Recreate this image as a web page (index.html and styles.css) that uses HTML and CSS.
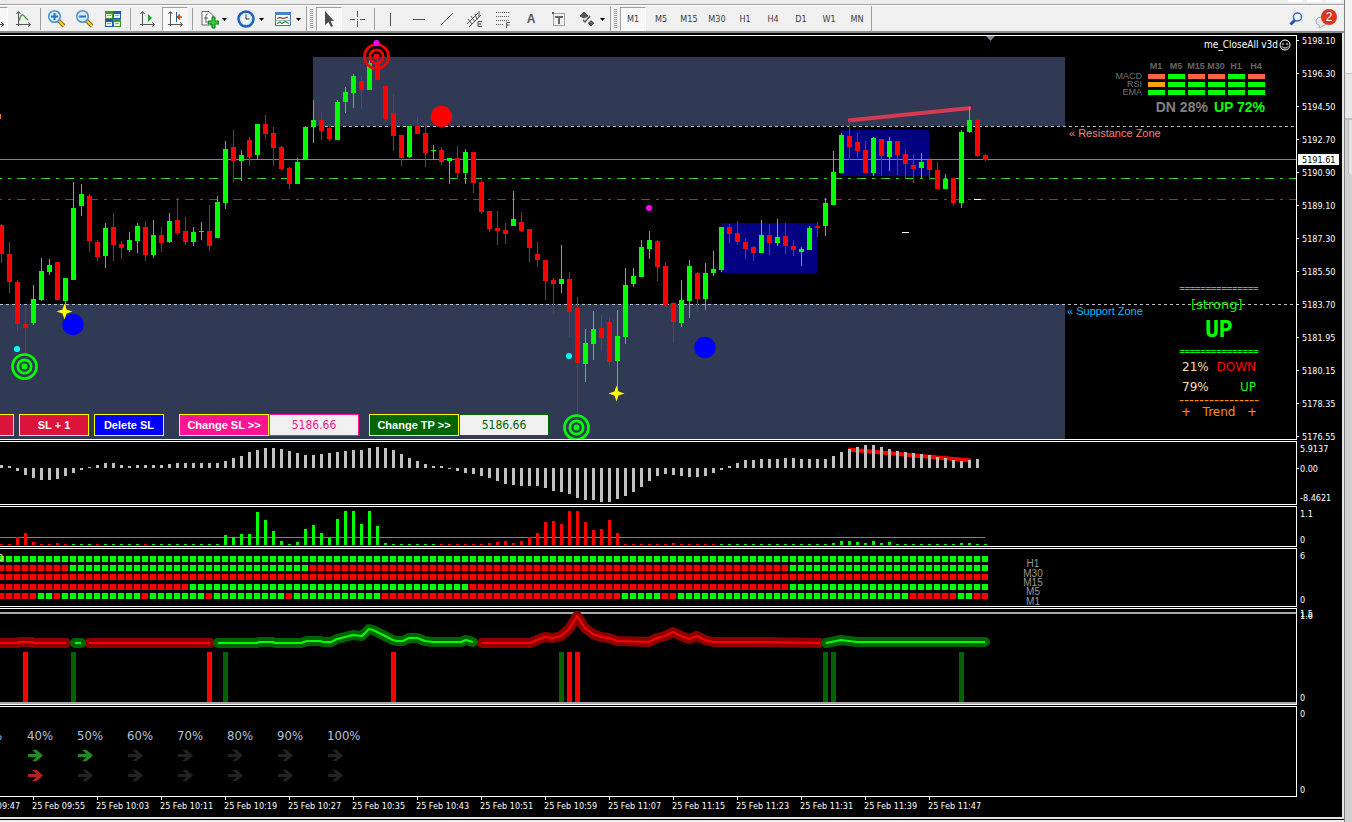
FILE: index.html
```html
<!DOCTYPE html>
<html lang="en">
<head>
<meta charset="utf-8">
<title>Trading terminal</title>
<link rel="stylesheet" href="styles.css">
</head>
<body>
<div class="window">
  <div class="titlebar"><i></i><i></i><i></i></div>
  <header class="toolbar">
    <button class="tool pressed first" aria-label="Candlesticks"><svg width="20" height="20"><path d="M14 15.5h5M16 13.5l3 2-3 2" class="ln"/></svg></button>
    <button class="tool" aria-label="Line chart"><svg width="20" height="20"><path d="M5.500 3v14M3 15.500h14M3.500 5l2-2.500 2 2.500M15 13.500l2.500 2-2.500 2" class="ln"/><path d="M6 12C8 4 10 5 12 8l3 3" fill="none" stroke="#3a9a3a" stroke-width="1.300"/></svg></button>
    <span class="sep"></span>
    <button class="tool" aria-label="Zoom in"><svg width="20" height="20"><path d="M11 11l6 6" stroke="#8f6a10" stroke-width="4"/><path d="M11 11l6 6" stroke="#f2cf3a" stroke-width="2"/><circle cx="7.500" cy="7.500" r="5.800" fill="#d4ecf8" stroke="#4a8fc8" stroke-width="1.500"/><path d="M4 7.500h7M7.500 4v7" stroke="#2a6cb0" stroke-width="2"/></svg></button>
    <button class="tool" aria-label="Zoom out"><svg width="20" height="20"><path d="M11 11l6 6" stroke="#8f6a10" stroke-width="4"/><path d="M11 11l6 6" stroke="#f2cf3a" stroke-width="2"/><circle cx="7.500" cy="7.500" r="5.800" fill="#d4ecf8" stroke="#4a8fc8" stroke-width="1.500"/><path d="M4 7.500h7" stroke="#2a6cb0" stroke-width="2"/></svg></button>
    <button class="tool" aria-label="Tile windows"><svg width="20" height="20"><path d="M2 2h8v8H2zM10 10h8v8h-8z" fill="#3c9a1e"/><path d="M10 2h8v8h-8zM2 10h8v8H2z" fill="#2456c0"/><path d="M3 5h6v4H3zM11 5h6v4h-6zM3 13h6v4H3zM11 13h6v4h-6z" fill="#e8f2e8"/><path d="M4 6.500h4M12 6.500h4M4 14.500h4M12 14.500h4" stroke="#8ab"/></svg></button>
    <span class="sep"></span>
    <button class="tool" aria-label="Auto scroll"><svg width="20" height="20"><path d="M5.500 3v14M3 15.500h14M3.500 5l2-2.500 2 2.500M15 13.500l2.500 2-2.500 2" class="ln"/><path d="M11 5l4 4-4 4z" fill="#1fa030"/></svg></button>
    <button class="tool pressed" aria-label="Chart shift"><svg width="20" height="20"><path d="M5.500 3v14M3 15.500h14M3.500 5l2-2.500 2 2.500M15 13.500l2.500 2-2.500 2" class="ln"/><path d="M11.500 3v10" stroke="#2060a0"/><path d="M17 8h-4M15 5.500L12.500 8l2.500 2.500" fill="none" stroke="#c04010" stroke-width="1.500"/></svg></button>
    <span class="sep"></span>
    <button class="tool wide" aria-label="Indicators"><svg width="20" height="20"><path d="M3 2.500h7l4 4V16H3z" fill="#fff" stroke="#666"/><path d="M9 5c-3 0-2 3-2 9M5 9h4" fill="none" stroke="#555"/><path d="M9 12h4V8h3v4h4v3h-4v4h-3v-4H9z" fill="#2fd03a" stroke="#0c7a18"/></svg><svg class="drop" width="5" height="3"><path d="M0 0h5L2.500 3z"/></svg></button>
    <button class="tool wide" aria-label="Periods"><svg width="20" height="20"><circle cx="10" cy="10" r="7.500" fill="#eaf5fc" stroke="#1d62b4" stroke-width="2.500"/><circle cx="10" cy="10" r="5.500" fill="none" stroke="#8ab8e0" stroke-dasharray="1 2"/><path d="M10 5.500V10h3.500" fill="none" stroke="#333"/></svg><svg class="drop" width="5" height="3"><path d="M0 0h5L2.500 3z"/></svg></button>
    <button class="tool wide" aria-label="Templates"><svg width="20" height="20"><path d="M2.500 3.500h15v13h-15z" fill="#fff" stroke="#3a76b4"/><path d="M2 3h16v3H2z" fill="#3f86cc"/><path d="M4 9.500l3-1 3 1 5-1.500" stroke="#a03020" fill="none" stroke-width="1.300"/><path d="M3 11.500h14" stroke="#9bc"/><path d="M4 14.500l3-1.500 2 1.500 3-2 4 2" stroke="#2a8a3a" fill="none" stroke-width="1.300"/></svg><svg class="drop" width="5" height="3"><path d="M0 0h5L2.500 3z"/></svg></button>
    <span class="end"></span><span class="grip"></span>
    <button class="tool pressed" aria-label="Cursor"><svg width="20" height="20"><path d="M6 2v14l3.500-3 2.500 5 2-1-2.500-5H15z" fill="#4d4d4d"/></svg></button>
    <button class="tool" aria-label="Crosshair"><svg width="20" height="20"><path d="M10.500 2v6M10.500 12v6M3 10.500h5M13 10.500h5M10 10.500h1" class="ln"/></svg></button>
    <span class="sep"></span>
    <button class="tool" aria-label="Vertical line"><svg width="20" height="20"><path d="M9.500 4v13" class="ln"/></svg></button>
    <button class="tool" aria-label="Horizontal line"><svg width="20" height="20"><path d="M4 10.500h12" class="ln"/></svg></button>
    <button class="tool" aria-label="Trendline"><svg width="20" height="20"><path d="M4 16L16 4" class="ln"/></svg></button>
    <button class="tool" aria-label="Equidistant channel"><svg width="20" height="20"><path d="M2 15L13 4M4 18L16 6M3 10l4 5M6 7l4 6M10 5l2 6M14 2v6" class="ln"/><path d="M17 12.500h-4v5h4M13 15h3" class="ln"/></svg></button>
    <button class="tool" aria-label="Fibonacci"><svg width="20" height="20"><path d="M3 3.500h14M3 7.500h14M3 11.500h14M3 15.500h8" class="ln" stroke-dasharray="1 1"/><path d="M17 13.500h-3.500V19M13 16h3.500" class="ln"/></svg></button>
    <button class="tool" aria-label="Text"><span class="letter">A</span></button>
    <button class="tool" aria-label="Text label"><svg width="20" height="20"><path d="M4.500 4.500h11v12h-11z" class="ln" stroke-dasharray="1 1"/><path d="M3 3h2v2H3z" fill="#555"/><path d="M6 8h8M10 8v7" stroke="#666" stroke-width="2"/></svg></button>
    <button class="tool wide" aria-label="Arrows"><svg width="20" height="20"><path d="M3 7l4-4 4 4-4 2zM11 14h6l-3 3z" fill="#555" stroke="#555"/><path d="M12 14l2-2 2 2M6 11l2 2 5-6" fill="none" stroke="#555" stroke-width="1.500"/></svg><svg class="drop" width="5" height="3"><path d="M0 0h5L2.500 3z"/></svg></button>
    <span class="end"></span><span class="grip"></span>
    <button class="tool pressed">M1</button><button class="tool">M5</button><button class="tool">M15</button><button class="tool">M30</button><button class="tool">H1</button><button class="tool">H4</button><button class="tool">D1</button><button class="tool">W1</button><button class="tool">MN</button>
    <span class="end"></span>
    <div class="right">
      <button class="plain" aria-label="Search"><svg width="14" height="14"><path d="M1.500 12.500l5-5" stroke="#2450b0" stroke-width="3"/><circle cx="8.500" cy="5" r="4" fill="#eef6fe" stroke="#3a66c8" stroke-width="1.500"/></svg></button>
      <button class="plain alerts" aria-label="Notifications"><svg width="14" height="14"><path d="M1 7a5.500 4.500 0 1 1 8 3.500L4 13l.5-2.500A4.500 4.500 0 0 1 1 7z" fill="#e4e6ea" stroke="#a8a8a8"/></svg><span class="badge">2</span></button>
    </div>
  </header>

  <main class="chart">
    <section class="pane">
      <div class="plot"><svg id="price" height="403"></svg>
        <p class="zone res">« Resistance Zone</p>
        <p class="zone sup">« Support Zone</p>
        <p class="expert">me_CloseAll v3d<svg width="12" height="12"><circle cx="6" cy="6" r="5" fill="none" stroke="#fff"/><path d="M4 4v2M8 4v2M3 7.500c1 2 5 2 6 0" fill="none" stroke="#fff"/></svg></p>
        <div class="signals">
          <table>
            <tr><td></td><th>M1</th><th>M5</th><th>M15</th><th>M30</th><th>H1</th><th>H4</th></tr>
            <tr><td>MACD</td><td><i class="t"></i></td><td><i></i></td><td><i class="t"></i></td><td><i class="t"></i></td><td><i></i></td><td><i class="t"></i></td></tr>
            <tr><td>RSI</td><td><i class="o"></i></td><td><i></i></td><td><i></i></td><td><i></i></td><td><i></i></td><td><i></i></td></tr>
            <tr><td>EMA</td><td><i></i></td><td><i></i></td><td><i></i></td><td><i></i></td><td><i></i></td><td><i></i></td></tr>
          </table>
          <p class="share"><span>DN 28%</span><b>UP 72%</b></p>
        </div>
        <div class="trend">
          <p class="rule">===============</p>
          <p class="strong">[strong]</p>
          <p class="up">UP</p>
          <p class="rule">===============</p>
          <p class="line"><span>21%</span><span class="red">DOWN</span></p>
          <p class="line"><span>79%</span><span class="lime">UP</span></p>
          <p class="rule dash">----------------</p>
          <p class="line orange"><span>+</span><span>Trend</span><span>+</span></p>
        </div>
        <div class="orders">
          <button class="order crimson" aria-label="SL - 1"></button>
          <button class="order crimson">SL + 1</button>
          <button class="order blue">Delete SL</button>
          <span class="pair pink"><button class="order" id="sl">Change SL &gt;&gt;</button><input aria-labelledby="sl" value="5186.66"></span>
          <span class="pair green"><button class="order" id="tp">Change TP &gt;&gt;</button><input aria-labelledby="tp" value="5186.66"></span>
        </div>
      </div>
      <svg class="axis" id="priceAxis"></svg>
    </section>
    <section class="pane"><div class="plot"><svg id="momentum" height="62"></svg></div><svg class="axis" id="ax2"></svg></section>
    <section class="pane"><div class="plot"><svg id="volume" height="39"></svg></div><svg class="axis" id="ax3"></svg></section>
    <section class="pane"><div class="plot"><svg id="heat" height="57"></svg></div><svg class="axis" id="ax4"></svg></section>
    <section class="pane"><div class="plot"><svg id="wave" height="95"></svg></div><svg class="axis" id="ax5"></svg></section>
    <section class="pane"><div class="plot"><svg id="levels" height="89"></svg></div><svg class="axis" id="ax6"></svg></section>
    <svg id="time" height="20"></svg>
  </main>
</div>
<aside class="behind"><i class="b1"></i><i class="b2"></i><i class="b3"></i></aside>
<script src="script.js"></script>
</body>
</html>
```
FILE: styles.css
```css
* { box-sizing: border-box; }
body { margin: 0; display: flex; min-height: 100vh; background: #f0f0f0; color: #fff; font: 9px "DejaVu Sans Condensed", "DejaVu Sans", sans-serif; overflow: hidden; }
p { margin: 0; }
svg { display: block; }
button { font: inherit; padding: 0; border: 0; background: none; color: inherit; }
.window { flex: 1; min-width: 0; }
.titlebar { height: 5px; background: #ececec; border-bottom: 1px solid #a0a0a0; display: flex; justify-content: flex-end; gap: 4px; padding-right: 3px; }
.titlebar i { width: 15px; height: 2px; background: #fff; }
.toolbar { display: flex; align-items: center; height: 28px; background: #f0f0f0; border-top: 1px solid #fff; border-bottom: 2px solid #8c8c8c; color: #3c3c3c; overflow: hidden; }
.tool { flex: none; width: 26px; height: 24px; margin: 0 1px; display: flex; align-items: center; justify-content: center; border: 1px solid transparent; }
.tool.first { margin-left: -18px; }
.pressed { background: #f8f8f8; border-color: #a0a0a0 #fff #fff #a0a0a0; }
.wide { width: 35px; justify-content: flex-start; padding-left: 2px; gap: 1px; }
.drop { margin-top: 2px; margin-left: 2px; }
.ln { fill: none; stroke: #555; }
.letter { font: bold 12px "Liberation Sans", sans-serif; color: #555; }
.sep, .end { flex: none; width: 1px; height: 22px; background: #a0a0a0; margin: 0 2px 0 3px; }
.end { height: 25px; margin: 0 3px 0 0; border-right: 0; }
.grip { flex: none; width: 3px; height: 20px; margin-right: 2px; background: repeating-linear-gradient(#a0a0a0 0 1px, #f0f0f0 1px 2px); }
.right { margin-left: auto; display: flex; align-items: center; padding-right: 7px; gap: 12px; }
.alerts { display: flex; align-items: flex-end; }
.badge { width: 16px; height: 16px; margin: 0 0 4px -8px; border-radius: 8px; background: #dc3420; color: #fff; font: 12px/16px "Liberation Sans", sans-serif; text-align: center; }

.chart { background: #000; padding-top: 2px; border-right: 2px solid #e8e8e8; border-bottom: 2px solid #e4e4e4; box-shadow: 0 1px #000; display: flex; flex-direction: column; gap: 1px; }
.pane { display: flex; }
.plot { flex: 1; min-width: 0; position: relative; border: 1px solid #fff; border-left: 0; }
.plot > svg, #time { width: 100%; }
.axis { flex: none; width: 45px; height: 1px; overflow: visible; }
#time { margin-top: -1px; }
svg text { fill: #fff; }
.zone { position: absolute; left: 1069px; font: 11px/12px "Liberation Sans", sans-serif; white-space: nowrap; }
.res { top: 91px; color: #fa8072; }
.sup { top: 269px; left: 1067px; color: #00bfff; }
.expert { position: absolute; top: 3px; right: 5px; display: flex; align-items: center; gap: 1px; font-size: 10px; line-height: 12px; }
.signals { position: absolute; top: 24px; right: 30px; font: 9px/8px "Liberation Sans", sans-serif; color: #777; }
.signals table { border-collapse: collapse; }
.signals td, .signals th { width: 20px; height: 8px; padding: 0; }
.signals th { height: 12px; color: #666; }
.signals td:first-child { width: 34px; text-align: right; padding-right: 4px; }
.signals i { display: block; width: 17px; height: 5px; margin: 0 auto; background: #0f0; }
.signals .t { background: #ff6347; }
.signals .o { background: #ffa500; }
.share { display: flex; justify-content: flex-end; gap: 6px; margin-top: 3px; padding-right: 1px; font: bold 14px/16px "Liberation Sans", sans-serif; color: #808080; }
.share b { color: #0f0; }
.trend { position: absolute; top: 248px; right: 37px; width: 80px; color: #0f0; font: 12px/20px "DejaVu Sans", sans-serif; }
.rule { font: bold 9px/10px "Liberation Sans", sans-serif; text-align: center; white-space: nowrap; }
.dash { font-size: 15px; font-weight: normal; color: #ff8c00; line-height: 6px; }
.strong { font-size: 13px; line-height: 22px; padding-left: 12px; }
.up { font: bold 24px/26px "Impact", "Roboto Condensed", "Open Sans Condensed", "Liberation Sans", sans-serif; text-align: center; height: 31px; }
.line { display: flex; justify-content: space-between; padding: 0 3px; color: #ffdead; }
.line .red { color: #f00; }
.line .lime { color: #0f0; }
.orange { color: #ff8c00; padding: 0 2px; line-height: 18px; }
.orders { position: absolute; bottom: 3px; left: -56px; display: flex; gap: 5px; }
.order { width: 70px; height: 22px; border: 1px solid #ff0; font: bold 11px/20px "Liberation Sans", sans-serif; color: #fff; }
.crimson { background: #dc143c; }
.blue { background: #00f; }
.pair { display: flex; margin-left: 10px; }
.pair + .pair { margin-left: 5px; }
.pair .order { width: 90px; }
.pair input { width: 90px; height: 22px; border: 1px solid; background: #f0f0f0; text-align: center; padding: 0; font: 12px "DejaVu Sans Condensed", "DejaVu Sans", sans-serif; }
.pink .order { background: #ff1493; }
.pink input { color: #ff1493; }
.green .order { background: #006400; }
.green input { color: #006400; }
.caps { font: 10px "Liberation Sans", sans-serif; }
.caps text { fill: #999; }
.pct { font-size: 13px; }
.pct text { fill: #b0c4de; }

.behind { flex: none; width: 8px; border-left: 1px solid #808080; background: #d0d0d0; display: flex; flex-direction: column; }
.b1 { height: 74px; background: #f2f2f2; border-bottom: 1px solid #c4c4c4; }
.b2 { height: 46px; background: #e8e8e8; border-bottom: 2px solid #bdbdbd; }
.b3 { height: 54px; margin-left: 3px; background: #e4e4e4; border-left: 1px solid #bbb; }
```
FILE: script.js
```js
const LIME = '#0f0', RED = '#f00';
const at = k => 1 + 8 * k;
const rect = (x, y, w, h, c) => `<rect x="${x}" y="${y}" width="${w}" height="${h}" fill="${c}"/>`;
const hline = (x1, x2, y, c, dash = '', w = 1, off = 0) => `<line x1="${x1}" x2="${x2}" y1="${y}" y2="${y}" stroke="${c}" stroke-width="${w}" stroke-dasharray="${dash}" stroke-dashoffset="${off}"/>`;
const put = (id, top, body) => { document.getElementById(id).innerHTML = `<g transform="translate(0,${-top})">${body}</g>`; };

// colour, high, body top, body bottom, low
const candles = `R224,225,254,263 R242,254,282,293 R280,282,324,331 R307,324,328,356 G285,299,323,325 G258,271,300,301 G259,265,272,275 R262,262,300,300 G278,278,301,307 G182,208,280,280
G184,194,206,216 R194,196,241,252 R240,242,257,261 G223,228,256,268 R213,227,245,261 R241,244,248,259 G232,240,250,252 G223,226,241,253 R221,227,255,261 G220,235,255,258
R227,235,243,252 G213,221,242,243 R198,220,233,235 R217,231,242,245 G227,232,242,246 G222,231,232,240 R205,231,246,251 G196,202,238,238 G141,149,203,209 R130,147,161,182
G150,155,161,181 R137,140,157,166 G124,124,155,160 R115,124,134,139 R127,133,148,166 R146,147,169,170 R167,168,184,189 G158,162,184,184 G126,127,160,160 G100,120,127,143
R112,120,131,140 R124,128,139,141 G100,102,140,140 G87,92,102,113 G74,76,93,108 R76,81,90,109 G60,63,90,90 R55,63,80,80 R86,86,119,121 R94,113,136,151
R135,135,158,166 G126,126,157,158 R117,126,134,134 R123,133,153,167 G145,150,151,160 R147,150,162,165 G158,158,161,184 R146,158,173,179 G149,152,173,184 R152,152,183,193
R180,182,212,214 R211,211,229,232 R211,228,231,245 R223,230,234,244 G191,219,226,226 R212,222,231,232 R229,229,248,262 R242,254,260,267 R260,260,281,300 R278,280,284,314
G245,279,284,293 R272,279,312,337 R297,308,363,414 G329,343,364,382 G311,329,344,360 R315,328,338,351 R317,322,362,367 G310,336,361,390 G268,285,337,344 G268,276,284,287
G240,247,277,277 G231,240,249,259 R240,241,267,281 R262,266,305,307 R302,303,322,343 G280,300,323,327 G260,266,301,318 R272,273,299,312 G263,273,299,310 G251,269,273,276
G227,227,270,272 R224,227,234,243 R221,233,242,245 R238,242,249,259 R246,247,253,261 G220,235,253,253 R224,235,243,255 G219,237,243,246 R223,236,246,254 R240,246,250,256
G247,249,252,266 G226,228,250,250 R222,226,228,237 G198,203,226,236 G151,172,205,205 G133,135,173,173 R120,136,147,160 R133,142,151,158 R141,150,173,173 G137,138,173,176
R139,139,156,176 G137,141,157,171 R141,141,155,175 R149,154,164,178 R154,165,169,183 G153,162,168,178 R158,160,170,180 R162,170,189,189 G174,179,189,189 R178,178,203,206
G130,132,203,208 G107,120,132,133 R119,120,156,157 R154,155,160,161`.split(/\s+/);

const dot = (x, y, r, c) => `<circle cx="${x}" cy="${y}" r="${r}" fill="${c}"/>`;
const target = (x, y, c) => `<g fill="none" stroke="${c}" stroke-width="2.700"><circle cx="${x}" cy="${y}" r="12"/><circle cx="${x}" cy="${y}" r="6.700"/></g>` + dot(x, y, 3, c);
const star = (x, y) => `<path d="M${x} ${y - 8}l2 6 6 2-6 2-2 6-2-6-6-2 6-2z" fill="#ff0"/>`;
const ZONE = '#303a54', NAVY = '#000080', DOTDASH = '9 6 3 6';

put('price', 36,
  rect(313, 57, 752, 69, ZONE) + rect(0, 304, 1065, 135, ZONE) +
  rect(721, 223, 96, 50, NAVY) + rect(841, 130, 88, 46, NAVY) +
  hline(313, '100%', 126.5, '#c0c0c0', '3 3') + hline(0, '100%', 304.5, '#c0c0c0', '3 3') +
  hline(0, '100%', 159.5, '#778899') +
  hline(-7, '100%', 178.5, '#32cd32', DOTDASH) + hline(-7, '100%', 199.5, '#f01010', DOTDASH) +
  '<path d="M848 120.500L971 108" stroke="#d43a52" stroke-width="4"/>' +
  candles.map((s, k) => {
    const c = s[0] === 'G' ? LIME : RED;
    const [hi, top, bot, lo] = s.slice(1).split(',').map(Number);
    return rect(at(k), hi, 1, Math.max(lo - hi, 1), c) + rect(at(k) - 2, top, 5, bot - top, c);
  }).join('') +
  target(376.5, 56.5, RED) + dot(376.500, 43, 3, '#f0f') + dot(441.500, 116.500, 10.700, RED) +
  dot(73, 324.500, 10.700, '#00f') + dot(705, 347.500, 10.700, '#00f') + star(64.500, 311.500) + star(616.500, 393.500) +
  dot(17, 349, 3, '#0ff') + dot(569, 356, 3, '#0ff') + dot(649, 208, 3, '#f0f') +
  target(24.500, 366.500, LIME) + target(576.500, 427.500, LIME) +
  rect(974, 199, 7, 1, '#fff') + rect(902, 232, 7, 1, '#fff') +
  '<path d="M986 36h9l-4.500 5z" fill="#778899"/>' + rect(0, 114, 1, 5, '#e08030'));

const momentum = [3,2,-3,-7,-10,-12,-12,-11,-8,-5,-2,1,3,5,5,3,2,3,3,3,3,4,5,5,5,5,5,5,7,10,12,16,18,20,20,19,17,15,13,13,14,15,16,17,18,18,20,21,20,18,14,10,7,4,2,2,-1,-3,-5,-6,-8,-10,-13,-16,-17,-18,-18,-18,-20,-23,-24,-26,-30,-32,-32,-34,-34,-31,-28,-24,-19,-13,-8,-6,-7,-8,-9,-9,-8,-5,-2,2,5,8,8,9,9,9,10,10,9,9,9,9,12,16,19,21,23,23,21,19,17,16,15,14,13,11,10,8,7,8,9];
put('momentum', 442, '<path d="M848 449.500L971 460.500" stroke="red" stroke-width="4"/>' +
  momentum.map((v, k) => rect(at(k) - 1, v > 0 ? 468 - v : 468, 3, Math.abs(v), '#c0c0c0')).join(''));

const spikes = {2:8,3:12,4:3,7:2,28:10,29:8,30:11,31:11,32:33,33:25,34:14,35:4,37:3,38:16,39:20,40:12,41:7,42:26,43:34,44:34,45:21,46:34,47:19,48:2,61:2,62:3,63:4,64:2,65:4,66:8,67:12,68:23,69:24,70:21,71:34,72:34,73:23,74:15,75:16,76:25,77:12,84:2,104:2,105:4,106:4,107:3,108:2,109:4,110:2,111:3,120:2,121:2};
const falling = k => k < 9 || k === 12 || k === 18 || (k > 54 && k < 90);
let bars = hline(0, 985, 537.5, '#808080');
for (let k = 0; k < 124; k++) { const h = spikes[k] || 1; bars += rect(at(k) - 1, 545 - h, 3, h, falling(k) ? RED : LIME); }
put('volume', 507, bars);

// indexes where each row changes colour, starting with green
const heat = [[556, [0]], [565, [0, 0, 9, 39, 99]], [574, [0, 0]], [584, [0, 0, 24, 59, 99]],
  [593, [0, 0, 5, 7, 8, 18, 19, 26, 27, 36, 37, 48, 78, 83, 85, 114, 120, 122]]];
let cells = '';
for (const [y, runs] of heat) for (let k = 0; k < 124; k++) {
  const green = runs.filter(r => r <= k).length % 2 === 1;
  cells += rect(at(k) - 5, y, 8, 6, green ? '#002800' : '#600000') + rect(at(k) - 3, y, 6, 6, green ? LIME : RED);
}
put('heat', 549, cells + '<g class="caps" text-anchor="middle">' +
  ['H1', 'M30', 'M15', 'M5', 'M1'].map((t, i) => `<text x="1033" y="${[567, 577, 586, 595, 605][i]}">${t}</text>`).join('') + '</g><text x="-2" y="561">0</text>');

const waves = [
  ['R', '-5,643 17,643 19,642 32,642 34,643 66,643'], ['R', '89,643 210,643'],
  ['R', '482,643 530,643 537,640 545,637 553,638 561,636 569,629 577,616 585,628 593,634 601,637 609,638 617,641 649,642 657,638 665,636 673,632 681,636 689,639 697,636 705,640 713,642 760,642 820,643'],
  ['G', '75,643 81,643'],
  ['G', '218,643 257,643 259,642 273,642 275,643 301,643 307,641 320,641 323,642 331,642 337,639 345,637 353,635 362,636 369,629 373,630 393,640 397,641 403,641 409,638 417,638 425,641 433,642 461,642 466,640 473,642'],
  ['G', '826,643 841,640 849,641 857,642 961,642 985,642']];
put('wave', 609, hline(0, '100%', 613, '#a9a9a9', '', 2) + hline(0, '100%', 703, '#a9a9a9', '', 2) +
  waves.map(([c, p]) => `<g fill="none" stroke-linejoin="round"><polyline points="${p}" stroke="${c === 'R' ? '#8b0000' : '#006400'}" stroke-width="10" stroke-linecap="round"/><polyline points="${p}" stroke="${c === 'R' ? RED : LIME}" stroke-width="2"/></g>`).join('') +
  [[25, 1], [73], [209, 1], [225], [393, 1], [561], [569, 1], [577, 1], [825], [833], [961]].map(([x, r]) => rect(x - 2, 652, 5, 50, r ? RED : '#006400')).join(''));

const arrow = (x, y, c) => `<path d="M${x} ${y - 1.5}h8.500l-4.500-4.200h4.500L${x + 15} ${y}l-6.500 5.700h-4.500l4.500-4.200h-8.500z" fill="${c}"/>`;
let levels = '<g class="pct"><text x="-24" y="740">30%</text>';
for (let i = 0; i < 7; i++) levels += `<text x="${27 + 50 * i}" y="740">${40 + 10 * i}%</text>`;
levels += '</g>';
for (let i = 0; i < 7; i++) levels += arrow(28 + 50 * i, 755.5, i < 2 ? '#228b22' : '#222') + arrow(28 + 50 * i, 775.5, i < 1 ? '#b22222' : '#222');
put('levels', 707, levels);

const label = (x, y, t) => rect(0, y, 2, 1, '#fff') + `<text x="${x}" y="${y + 4}">${t}</text>`;
const prices = ['5198.10', '5196.30', '5194.50', '5192.70', '5190.90', '5189.10', '5187.30', '5185.50', '5183.70', '5181.95', '5180.15', '5178.35', '5176.55'];
put('priceAxis', 35, prices.map((p, i) => label(5, 40 + 33 * i, p)).join('') + rect(1, 154, 41, 11, '#fff') + '<text x="5" y="163" style="fill:#000">5191.61</text>');
const plain = (y, t) => `<text x="3" y="${y + 4}">${t}</text>`;
put('ax2', 441, plain(448, '5.9137') + label(3, 468, '0.00') + plain(497, '-8.4621'));
put('ax3', 506, plain(513, '1.1') + plain(539, '0'));
put('ax4', 548, plain(555, '6') + plain(599, '0'));
put('ax5', 608, plain(613, '1.5') + plain(615, '1.6') + plain(697, '0'));
put('ax6', 706, plain(713, '0') + plain(789, '0'));

let stamps = '<text x="-33" y="809">25 Feb 09:47</text>';
['09:55', '10:03', '10:11', '10:19', '10:27', '10:35', '10:43', '10:51', '10:59', '11:07', '11:15', '11:23', '11:31', '11:39', '11:47'].forEach((t, i) => {
  stamps += rect(33 + 64 * i, 797, 1, 3, '#fff') + `<text x="${32 + 64 * i}" y="809">25 Feb ${t}</text>`;
});
put('time', 797, stamps);
```
